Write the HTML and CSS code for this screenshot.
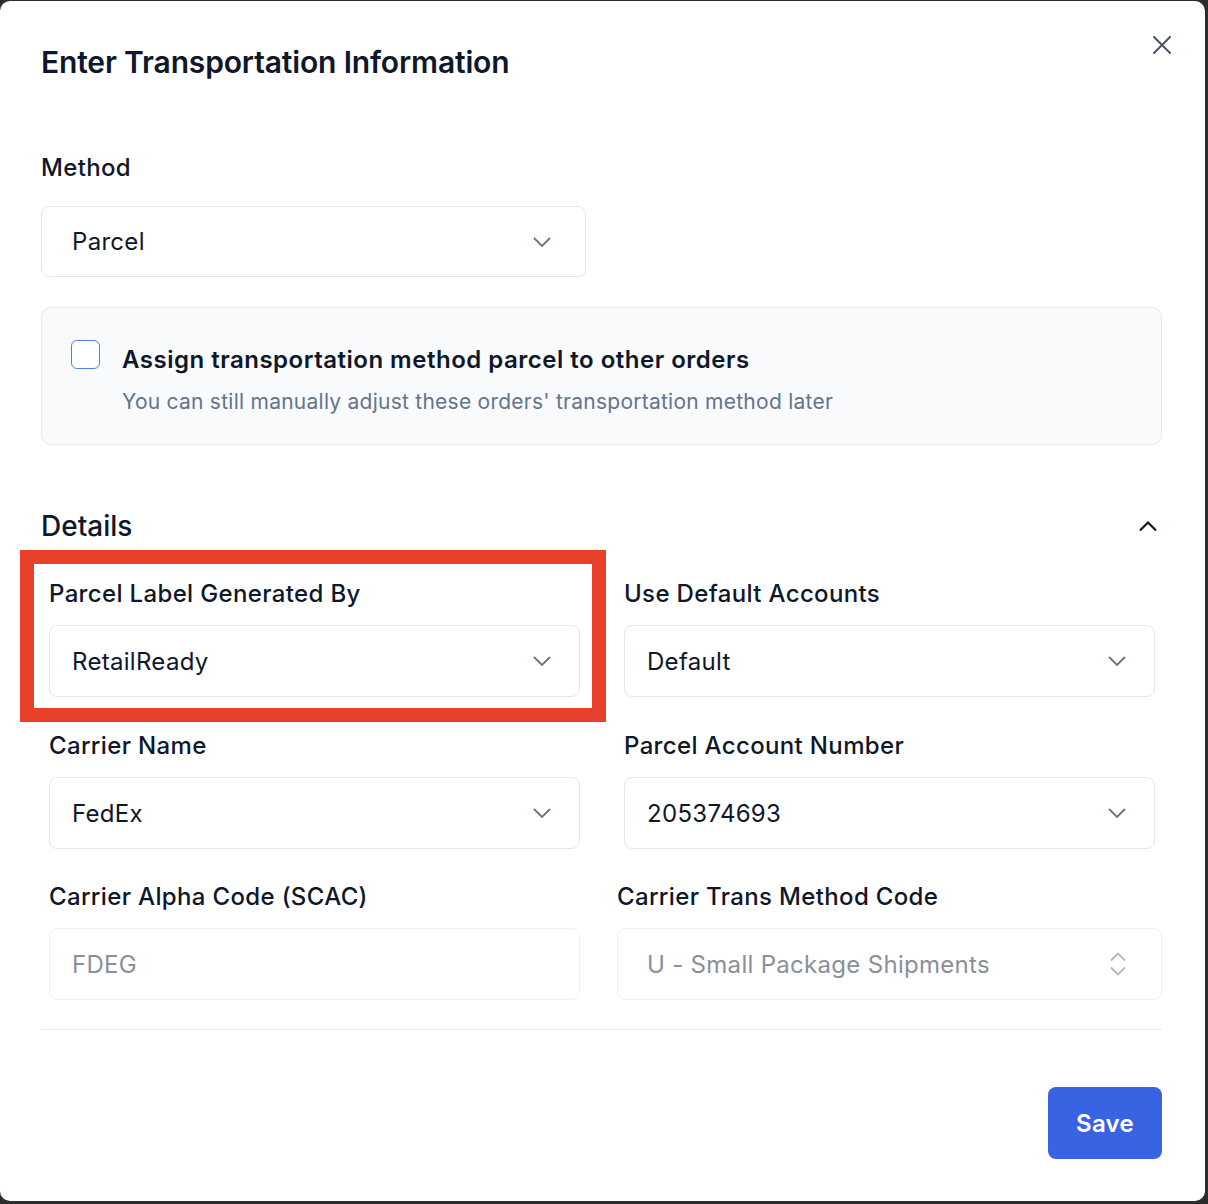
FILE: index.html
```html
<!DOCTYPE html>
<html lang="en">
<head>
  <meta charset="UTF-8">
  <meta name="viewport" content="width=device-width, initial-scale=1">
  <title>Enter Transportation Information</title>
  <link rel="stylesheet" href="styles.css">
</head>
<body>
  <div class="modal">
    <div class="modal-header">
      <h1 class="modal-title">Enter Transportation Information</h1>
      <button class="close-btn" aria-label="Close">
        <svg width="18" height="18" viewBox="0 0 18 18"><path d="M1 1L17 17M17 1L1 17" stroke="#4b5563" stroke-width="2" stroke-linecap="round" fill="none"/></svg>
      </button>
    </div>

    <div class="method">
      <div class="field-label">Method</div>
      <div class="select select-method">
        <span>Parcel</span>
        <svg class="chev" width="18" height="10" viewBox="0 0 18 10"><path d="M1 1l8 8 8-8" stroke="#6b7280" stroke-width="1.8" fill="none"/></svg>
      </div>
    </div>

    <div class="assign-card">
      <span class="checkbox"></span>
      <div class="assign-text">
        <div class="assign-title">Assign transportation method parcel to other orders</div>
        <div class="assign-sub">You can still manually adjust these orders' transportation method later</div>
      </div>
    </div>

    <div class="details-head">
      <h2 class="details-title">Details</h2>
      <svg width="18" height="11" viewBox="0 0 18 11"><path d="M1 9.5l8-8 8 8" stroke="#0f172a" stroke-width="2.2" fill="none"/></svg>
    </div>

    <div class="details-grid">
      <div class="field">
        <div class="field-label">Parcel Label Generated By</div>
        <div class="select">
          <span>RetailReady</span>
          <svg class="chev" width="18" height="10" viewBox="0 0 18 10"><path d="M1 1l8 8 8-8" stroke="#6b7280" stroke-width="1.8" fill="none"/></svg>
        </div>
      </div>
      <div class="field">
        <div class="field-label">Use Default Accounts</div>
        <div class="select">
          <span>Default</span>
          <svg class="chev" width="18" height="10" viewBox="0 0 18 10"><path d="M1 1l8 8 8-8" stroke="#6b7280" stroke-width="1.8" fill="none"/></svg>
        </div>
      </div>
      <div class="field">
        <div class="field-label">Carrier Name</div>
        <div class="select">
          <span>FedEx</span>
          <svg class="chev" width="18" height="10" viewBox="0 0 18 10"><path d="M1 1l8 8 8-8" stroke="#6b7280" stroke-width="1.8" fill="none"/></svg>
        </div>
      </div>
      <div class="field">
        <div class="field-label">Parcel Account Number</div>
        <div class="select">
          <span>205374693</span>
          <svg class="chev" width="18" height="10" viewBox="0 0 18 10"><path d="M1 1l8 8 8-8" stroke="#6b7280" stroke-width="1.8" fill="none"/></svg>
        </div>
      </div>
    </div>

    <div class="codes-grid">
      <div class="field">
        <div class="field-label">Carrier Alpha Code (SCAC)</div>
        <div class="select disabled">
          <span>FDEG</span>
        </div>
      </div>
      <div class="field">
        <div class="field-label">Carrier Trans Method Code</div>
        <div class="select disabled select-trans">
          <span>U - Small Package Shipments</span>
          <svg width="18" height="26" viewBox="0 0 18 26"><path d="M2 9.5l7-7 7 7M2 16.5l7 7 7-7" stroke="#b4b8bf" stroke-width="1.8" fill="none"/></svg>
        </div>
      </div>
    </div>

    <div class="divider"></div>

    <div class="footer">
      <button class="save-btn">Save</button>
    </div>

    <!-- highlight annotation -->
    <div class="highlight"></div>
  </div>
</body>
</html>
```

FILE: styles.css
```css
body {
  margin: 0;
  background-color: #2c2c2e;
  font-family: Inter, "Noto Sans", sans-serif;
  color: #0f172a;
}
.modal {
  position: relative;
  box-sizing: border-box;
  width: 1205px;
  height: 1200px;
  margin-top: 1px;
  padding: 41px 43px 0 41px;
  background-color: #fff;
  border-radius: 10px;
}
.modal-header {
  display: flex;
  justify-content: space-between;
  align-items: flex-start;
}
.modal-title {
  margin: 0;
  font-size: 30px;
  line-height: 40px;
  font-weight: 600;
  letter-spacing: -0.15px;
}
.close-btn {
  margin: -6px -9px 0 0;
  padding: 0;
  border: none;
  background: none;
  width: 18px;
  height: 18px;
  cursor: pointer;
}
.close-btn svg {
  display: block;
}
.method {
  margin-top: 70px;
  width: 545px;
}
.method .field-label {
  margin-bottom: 22px;
}
.field-label {
  font-size: 24px;
  line-height: 32px;
  font-weight: 500;
  letter-spacing: 0.35px;
  margin-bottom: 15px;
}
.select {
  box-sizing: border-box;
  height: 72px;
  display: flex;
  align-items: center;
  justify-content: space-between;
  padding: 0 28px 0 22px;
  border: 1px solid #e3e6ee;
  border-radius: 8px;
  font-size: 24px;
  letter-spacing: 0.3px;
  color: #0f172a;
}
.select-method {
  height: 71px;
  padding: 0 34px 0 30px;
}
.chev {
  display: block;
}
.select.disabled {
  border-color: #f0f1f4;
  color: #8b8f98;
}
.select-trans {
  padding: 0 34px 0 29px;
}
.assign-card {
  margin-top: 30px;
  box-sizing: border-box;
  width: 1121px;
  display: flex;
  gap: 22px;
  padding: 32px 30px 29px 29px;
  background-color: #f9fafb;
  border: 1px solid #e8eaee;
  border-radius: 10px;
}
.checkbox {
  flex: none;
  box-sizing: border-box;
  width: 29px;
  height: 29px;
  border: 1.5px solid #4f7ff0;
  border-radius: 6px;
  background: #fff;
}
.assign-text {
  margin-top: 6px;
}
.assign-title {
  font-size: 24px;
  line-height: 28px;
  font-weight: 600;
  letter-spacing: 0.5px;
}
.assign-sub {
  margin-top: 15px;
  font-size: 21px;
  line-height: 26px;
  letter-spacing: 0.25px;
  color: #64748b;
}
.details-head {
  margin-top: 65px;
  width: 1116px;
  display: flex;
  justify-content: space-between;
  align-items: center;
}
.details-title {
  margin: 0;
  font-size: 28px;
  line-height: 32px;
  font-weight: 500;
}
.details-grid {
  margin-top: 36px;
  display: grid;
  grid-template-columns: 531px 531px;
  column-gap: 44px;
  row-gap: 33px;
  padding: 0 8px;
}
.codes-grid {
  margin-top: 32px;
  display: grid;
  grid-template-columns: 531px 545px;
  column-gap: 37px;
  padding-left: 8px;
}
.divider {
  margin-top: 29px;
  width: 1121px;
  height: 1px;
  background-color: #e5e7eb;
}
.footer {
  width: 1121px;
  display: flex;
  justify-content: flex-end;
  margin-top: 57px;
}
.save-btn {
  width: 114px;
  height: 72px;
  border: none;
  border-radius: 8px;
  background-color: #3863e3;
  color: #fff;
  font-family: Inter, "Noto Sans", sans-serif;
  font-size: 24px;
  font-weight: 600;
  letter-spacing: 0.3px;
  cursor: pointer;
}
.highlight {
  position: absolute;
  left: 20px;
  top: 549px;
  width: 586px;
  height: 172px;
  box-sizing: border-box;
  border: 14px solid #e8402a;
  pointer-events: none;
}
```
